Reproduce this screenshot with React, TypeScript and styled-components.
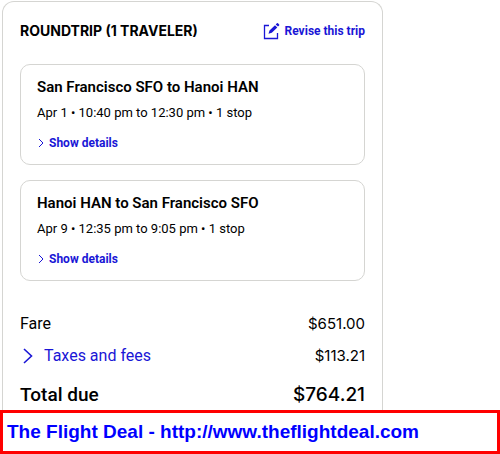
import React from "react";
import styled, { createGlobalStyle } from "styled-components";

const ink = "#000000";
const blue = "#1a16d6";
const line = "#d5d5d2";

const GlobalStyle = createGlobalStyle`
  * { box-sizing: border-box; }
  body {
    margin: 0;
    background: #ffffff;
    color: ${ink};
    font-family: Roboto, "Liberation Sans", sans-serif;
  }
  h2, h3, p, dl, dt, dd { margin: 0; }
`;

const Page = styled.main`
  padding-top: 1px;
`;

const SummaryCard = styled.section`
  max-width: 381px;
  margin-left: 2px;
  padding: 16px 17px 0;
  border: 1px solid ${line};
  border-bottom: 0;
  border-radius: 12px 12px 0 0;
`;

const Header = styled.header`
  display: flex;
  align-items: center;
  justify-content: space-between;
  height: 26px;
`;

const Title = styled.h2`
  font-family: Inter, sans-serif;
  font-size: 14px;
  line-height: 20px;
  font-weight: 700;
`;

const LinkButton = styled.button<{ $large?: boolean; $gap?: number }>`
  display: inline-flex;
  align-items: center;
  gap: ${(p) => p.$gap ?? 4}px;
  padding: 0;
  border: 0;
  background: none;
  color: ${blue};
  font-family: inherit;
  font-size: ${(p) => (p.$large ? 16 : 12)}px;
  line-height: ${(p) => (p.$large ? 24 : 16)}px;
  font-weight: ${(p) => (p.$large ? 400 : 700)};
  cursor: pointer;
`;

const Flights = styled.div`
  display: grid;
  gap: 15px;
  margin-top: 20px;
`;

const FlightCard = styled.article`
  display: flex;
  flex-direction: column;
  align-items: flex-start;
  padding: 10px 16px 13px;
  border: 1px solid ${line};
  border-radius: 10px;
`;

const Route = styled.h3`
  font-size: 15px;
  line-height: 24px;
  font-weight: 600;
`;

const Times = styled.p`
  margin: 3px 0 11px;
  font-size: 13px;
  line-height: 22px;
`;

const Prices = styled.dl`
  margin-top: 27px;
`;

const PriceRow = styled.div<{ $total?: boolean }>`
  display: flex;
  align-items: ${(p) => (p.$total ? "flex-end" : "center")};
  justify-content: space-between;
  height: ${(p) => (p.$total ? 38 : 32)}px;
  font-size: ${(p) => (p.$total ? 19 : 16)}px;
  line-height: ${(p) => (p.$total ? 30 : 24)}px;
  font-weight: ${(p) => (p.$total ? 500 : 400)};
`;

const Label = styled.dt`
  display: flex;
`;

const Amount = styled.dd<{ $total?: boolean }>`
  font-family: Inter, sans-serif;
  font-size: ${(p) => (p.$total ? 19 : 15)}px;
`;

const Banner = styled.footer`
  display: flex;
  align-items: center;
  height: 44px;
  padding: 0 4px;
  border: 3px solid #ff0000;
  background: #ffffff;
  color: #0000ff;
  font: bold 19px/24px "Liberation Sans", Arial, sans-serif;
`;

const SiteLink = styled.a`
  color: inherit;
  text-decoration: none;
`;

const Chevron = ({ large = false }: { large?: boolean }) => (
  <svg width={large ? 16 : 8} height={large ? 16 : 10} viewBox={large ? "0 0 16 16" : "0 0 8 10"} fill="none" stroke="currentColor" aria-hidden="true">
    {large ? <path d="M4 1 11.500 8 4 15" strokeWidth="1.600" /> : <path d="M2 1 6 5 2 9" strokeWidth="1" />}
  </svg>
);

const EditIcon = () => (
  <svg width="17" height="17" viewBox="0 0 17 17" fill="none" aria-hidden="true">
    <path d="M6 2.500H1.500V15.500H14.500V10" stroke="currentColor" strokeWidth="1.300" />
    <path d="m5.500 10.800 1-3.300L12 2.200l2.300 2.300-5.500 5.300zM12.700 1.400 13.900.300q.500-.500 1.100 0l1.100 1.100q.500.500 0 1.100l-1.100 1.100z" fill="currentColor" />
  </svg>
);

const flights = [
  { route: "San Francisco SFO to Hanoi HAN", times: "Apr 1 • 10:40 pm to 12:30 pm • 1 stop" },
  { route: "Hanoi HAN to San Francisco SFO", times: "Apr 9 • 12:35 pm to 9:05 pm • 1 stop" },
];

export default function App() {
  return (
    <>
      <GlobalStyle />
      <Page>
        <SummaryCard>
          <Header>
            <Title>ROUNDTRIP (1 TRAVELER)</Title>
            <LinkButton type="button" $gap={5}><EditIcon />Revise this trip</LinkButton>
          </Header>
          <Flights>
            {flights.map((flight) => (
              <FlightCard key={flight.route}>
                <Route>{flight.route}</Route>
                <Times>{flight.times}</Times>
                <LinkButton type="button"><Chevron />Show details</LinkButton>
              </FlightCard>
            ))}
          </Flights>
          <Prices>
            <PriceRow><Label>Fare</Label><Amount>$651.00</Amount></PriceRow>
            <PriceRow>
              <Label><LinkButton type="button" $large $gap={8}><Chevron large />Taxes and fees</LinkButton></Label>
              <Amount>$113.21</Amount>
            </PriceRow>
            <PriceRow $total><Label>Total due</Label><Amount $total>$764.21</Amount></PriceRow>
          </Prices>
        </SummaryCard>
        <Banner>
          <span>The Flight Deal - <SiteLink href="http://www.theflightdeal.com">http://www.theflightdeal.com</SiteLink></span>
        </Banner>
      </Page>
    </>
  );
}
